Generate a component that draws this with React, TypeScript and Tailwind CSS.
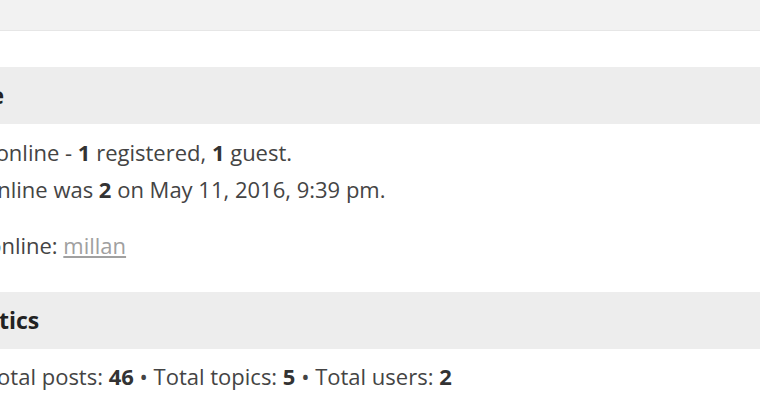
export default function App() {
  return (
    <div className="w-[760px] h-[420px] overflow-hidden bg-white text-[#444] font-['Open_Sans',sans-serif]">
      {/* top strip */}
      <div className="h-[31px] bg-[#f2f2f2] border-b border-[#e6e6e6]" />

      {/* Who is online */}
      <div className="mt-[36px] h-[57px] bg-[#ededed] flex items-center overflow-hidden">
        <h3 className="-ml-[150px] whitespace-nowrap text-[23px] font-bold text-[#222]">Who is online</h3>
      </div>
      <div className="pt-[10px] text-[22px] whitespace-nowrap">
        <p className="-ml-[262px] leading-[37px]">
          In total there are <b className="text-[#333]">2</b> users online - <b className="text-[#333]">1</b> registered, <b className="text-[#333]">1</b> guest.
        </p>
        <p className="-ml-[185px] leading-[37px]">
          Most users ever online was <b className="text-[#333]">2</b> on May 11, 2016, 9:39 pm.
        </p>
        <p className="-ml-[188px] leading-[37px] mt-[19px]">
          Registered users online: <a href="#" className="text-[#a0a0a0] underline">millan</a>
        </p>
      </div>

      {/* Statistics */}
      <div className="mt-[28px] h-[57px] bg-[#ededed] flex items-center overflow-hidden">
        <h3 className="-ml-[66px] whitespace-nowrap text-[23px] font-bold text-[#222]">Statistics</h3>
      </div>
      <div className="pt-[9px] text-[22px] whitespace-nowrap">
        <p className="-ml-[15px] leading-[37px]">
          Total posts: <b className="text-[#333]">46</b> • Total topics: <b className="text-[#333]">5</b> • Total users: <b className="text-[#333]">2</b>
        </p>
      </div>
    </div>
  );
}
